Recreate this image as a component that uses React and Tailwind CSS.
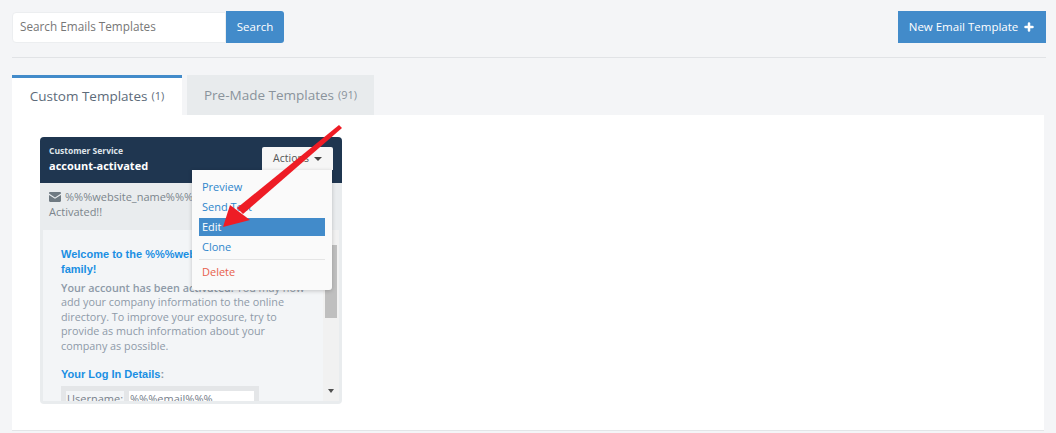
import { Plus } from "lucide-react"

function ActionsMenu() {
  return (
    <div className="absolute left-[152px] top-[33px] z-10 w-[140px] h-[120px] rounded-b-[3px] bg-[#fafafa] pt-[7px] px-[7px] text-[11px] text-[#2f86cc] shadow-[0_1px_4px_rgba(0,0,0,0.2)]">
      <div className="h-[20px] px-[3px] leading-[20px]">Preview</div>
      <div className="h-[21px] px-[3px] leading-[20px]">Send Test</div>
      <div className="h-[18px] bg-[#428bca] px-[3px] leading-[18px] text-white">Edit</div>
      <div className="h-[20px] mt-[1px] px-[3px] leading-[20px]">Clone</div>
      <div className="mt-[2px] h-px bg-[#e5e5e5]" />
      <div className="mt-[2px] h-[20px] px-[3px] leading-[20px] text-[#e8604c]">Delete</div>
    </div>
  )
}

function TemplateCard() {
  return (
    <div className="relative w-[302px] h-[267px] overflow-hidden rounded-[4px] bg-[#e9ecee]">
      <div className="flex h-[46px] items-start justify-between bg-[#1f3650] pl-[9px] pr-[9px] pt-[9px] text-white">
        <div>
          <div className="text-[8.5px] leading-[10px] font-bold text-[#dfe4e9]">Customer Service</div>
          <div className="mt-[2px] text-[11px] leading-[15px] font-bold">account-activated</div>
        </div>
        <div className="mt-px flex h-[23px] w-[71px] items-center justify-center gap-[5px] rounded-t-[2px] bg-[#f6f6f6] text-[10.5px] text-[#555]">
          Actions
          <span className="h-0 w-0 border-x-[4px] border-t-[4px] border-x-transparent border-t-[#444]" />
        </div>
      </div>
      <div className="h-[47px] px-[9px] pt-[6px] text-[11px] leading-[15px] text-[#7b858c]">
        <div className="flex items-center gap-[4px]">
          <svg width="12" height="10" viewBox="0 0 12 10">
            <path d="M0 1.2C0 .5.5 0 1.2 0h9.6c.7 0 1.2.5 1.2 1.2v.3L6 5.4 0 1.5z" fill="#6f7a82" />
            <path d="M0 2.9l6 3.9 6-3.9v5.9c0 .7-.5 1.2-1.2 1.2H1.2C.5 10 0 9.500 0 8.800z" fill="#6f7a82" />
          </svg>
          <span>%%%website_name%%%</span>
        </div>
        <div>Activated!!</div>
      </div>
      <div className="mx-[3px] flex h-[171px] overflow-hidden">
        <div className="w-[280px] shrink-0 bg-[#f3f5f7] pl-[18px] pt-[17px]">
          <div className="font-['Liberation_Sans',sans-serif] text-[11px] leading-[15px] font-bold text-[#1a8fe3]">
            Welcome to the %%%website_name%%%
            <br />
            family!
          </div>
          <p className="mt-[4px] w-[247px] text-[10.8px] leading-[14.4px] text-[#8e9aa8]">
            <span className="font-semibold">Your account has been activated.</span> You may now add your company information to the online directory. To improve your exposure, try to provide as much information about your company as possible.
          </p>
          <div className="mt-[14px] font-['Liberation_Sans',sans-serif] text-[11px] leading-[15px] font-bold text-[#1a8fe3]">
            Your Log In Details<span className="text-[#8e9aa8]">:</span>
          </div>
          <div className="mt-[4px] flex h-[21px] w-[198px] gap-[5px] overflow-hidden bg-[#e4e6e8] pl-[5px] pt-[5px] pr-[5px] text-[11px] leading-[15px] text-[#77808a]">
            <span className="w-[58px] shrink-0 bg-[#f3f5f7] pl-[1px]">Username:</span>
            <span className="flex-1 bg-white pl-[1px] text-[11px]">%%%email%%%</span>
          </div>
        </div>
        <div className="relative w-[16px] bg-[#f1f1f1]">
          <div className="mx-auto mt-[15px] h-[73px] w-[12px] bg-[#bfbfbf]" />
          <span className="absolute bottom-[8px] left-[5px] h-0 w-0 border-x-[3.5px] border-t-[4px] border-x-transparent border-t-[#505050]" />
        </div>
      </div>
      <ActionsMenu />
    </div>
  )
}

export default function App() {
  return (
    <div className="relative h-[433px] w-[1056px] overflow-hidden bg-[#f4f5f7] font-['Open_Sans',sans-serif]">
      <div className="pl-[12px] pr-[10px] pt-[11px]">
        <div className="flex items-center justify-between border-b border-[#e1e3e6] pb-[14px]">
          <div className="flex h-[32px] items-center">
            <div className="flex h-[31px] w-[214px] items-center rounded-l-[4px] border border-[#eceef0] bg-white pl-[7px] text-[11.75px] text-[#777]">
              Search Emails Templates
            </div>
            <button className="h-[32px] w-[58px] rounded-r-[3px] bg-[#428bca] text-[11.5px] font-medium text-white">
              Search
            </button>
          </div>
          <button className="flex h-[32px] w-[148px] items-center justify-center gap-[5px] bg-[#428bca] text-[11.5px] font-medium text-white">
            New Email Template
            <Plus size={12} strokeWidth={5} />
          </button>
        </div>

        <div className="mt-[17px] flex items-end gap-[5px] pr-[2px]">
          <div className="flex h-[40px] w-[170px] items-center justify-center border-t-[3px] border-[#428bca] bg-white text-[13.5px] text-[#5d6b7a]">
            Custom Templates<span className="ml-[4px] text-[11px]">(1)</span>
          </div>
          <div className="flex h-[40px] w-[187px] items-center justify-center bg-[#e8ebed] text-[13.5px] text-[#8a939c]">
            Pre-Made Templates<span className="ml-[4px] text-[11px]">(91)</span>
          </div>
        </div>

        <div className="mr-[2px] h-[316px] border-b border-[#e3e5e8] bg-white pl-[28px] pt-[22px]">
          <TemplateCard />
        </div>
      </div>

      <svg className="pointer-events-none absolute left-0 top-0 z-20" width="1056" height="433">
        <polygon points="339,125 342,128 243,214 237,208" fill="#ee1c25" />
        <polygon points="223,227 230,205 250,220" fill="#ee1c25" />
      </svg>
    </div>
  )
}
